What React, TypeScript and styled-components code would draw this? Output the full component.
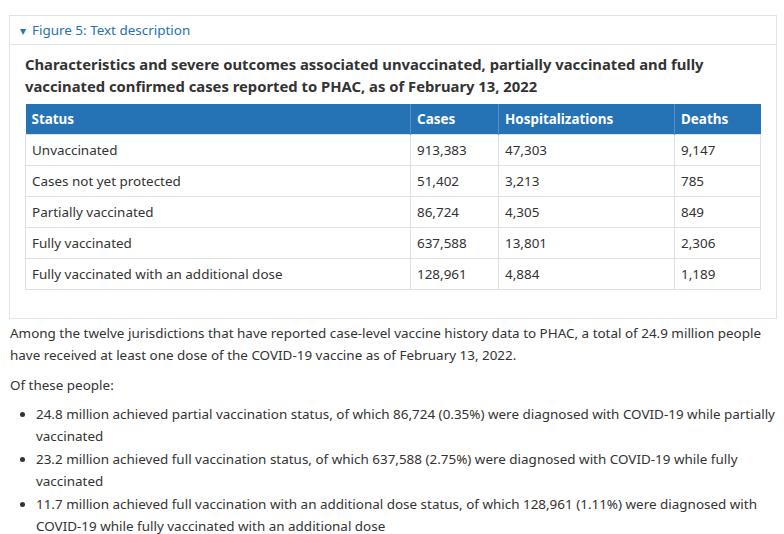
import styled, { createGlobalStyle } from 'styled-components';

const Global = createGlobalStyle`
  body {
    margin: 0;
    background: #fff;
    font-family: 'Noto Sans', 'Open Sans', sans-serif;
    color: #333;
    font-size: 13.45px;
  }
`;

const Page = styled.main`
  padding: 15px 3px 0 9px;
  line-height: 22px;
`;

const Details = styled.details`
  border: 1px solid #e3e3e3;
  margin: 0 4px 3px 0;
`;

const Summary = styled.summary`
  color: #2572b4;
  padding: 3px 10px 2px;
  border-bottom: 1px solid #e3e3e3;
  cursor: pointer;
  list-style: none;
  &::-webkit-details-marker { display: none; }
  &::before {
    content: '▾';
    display: inline-block;
    margin-right: 6px;
    font-size: 12px;
  }
`;

const Body = styled.div`
  padding: 8px 15px 28px;
`;

const Caption = styled.h3`
  margin: 0 0 7px;
  font-size: 14.8px;
  font-weight: 700;
  line-height: 22px;
  color: #333;
`;

const Table = styled.table`
  width: 100%;
  border-collapse: collapse;
  table-layout: fixed;
`;

const Th = styled.th<{ w?: number }>`
  box-sizing: border-box;
  width: ${p => (p.w ? `${p.w}px` : 'auto')};
  background: #2572b4;
  color: #fff;
  text-align: left;
  font-weight: 700;
  height: 30px;
  padding: 0 6px;
  border-left: 1px solid #5790c8;
  &:first-child { border-left: none; }
`;

const Td = styled.td`
  border: 1px solid #e0e0e0;
  height: 30px;
  padding: 0 6px;
`;

const P = styled.p<{ gap?: number }>`
  margin: 0 0 ${p => p.gap ?? 7}px 1px;
`;

const List = styled.ul`
  margin: 0;
  padding-left: 27px;
  li { margin-bottom: 1px; }
`;

const rows = [
  ['Unvaccinated', '913,383', '47,303', '9,147'],
  ['Cases not yet protected', '51,402', '3,213', '785'],
  ['Partially vaccinated', '86,724', '4,305', '849'],
  ['Fully vaccinated', '637,588', '13,801', '2,306'],
  ['Fully vaccinated with an additional dose', '128,961', '4,884', '1,189'],
];

export default function App() {
  return (
    <Page>
      <Global />
      <Details open>
        <Summary>Figure 5: Text description</Summary>
        <Body>
          <Caption>
            Characteristics and severe outcomes associated unvaccinated, partially vaccinated and fully
            vaccinated confirmed cases reported to PHAC, as of February 13, 2022
          </Caption>
          <Table>
            <thead>
              <tr>
                <Th>Status</Th>
                <Th w={88}>Cases</Th>
                <Th w={176}>Hospitalizations</Th>
                <Th w={86}>Deaths</Th>
              </tr>
            </thead>
            <tbody>
              {rows.map(r => (
                <tr key={r[0]}>
                  {r.map((c, i) => <Td key={i}>{c}</Td>)}
                </tr>
              ))}
            </tbody>
          </Table>
        </Body>
      </Details>
      <P gap={8}>
        Among the twelve jurisdictions that have reported case-level vaccine history data to PHAC, a total of 24.9 million people
        have received at least one dose of the COVID-19 vaccine as of February 13, 2022.
      </P>
      <P>Of these people:</P>
      <List>
        <li>24.8 million achieved partial vaccination status, of which 86,724 (0.35%) were diagnosed with COVID-19 while partially vaccinated</li>
        <li>23.2 million achieved full vaccination status, of which 637,588 (2.75%) were diagnosed with COVID-19 while fully vaccinated</li>
        <li>11.7 million achieved full vaccination with an additional dose status, of which 128,961 (1.11%) were diagnosed with COVID-19 while fully vaccinated with an additional dose</li>
      </List>
    </Page>
  );
}
